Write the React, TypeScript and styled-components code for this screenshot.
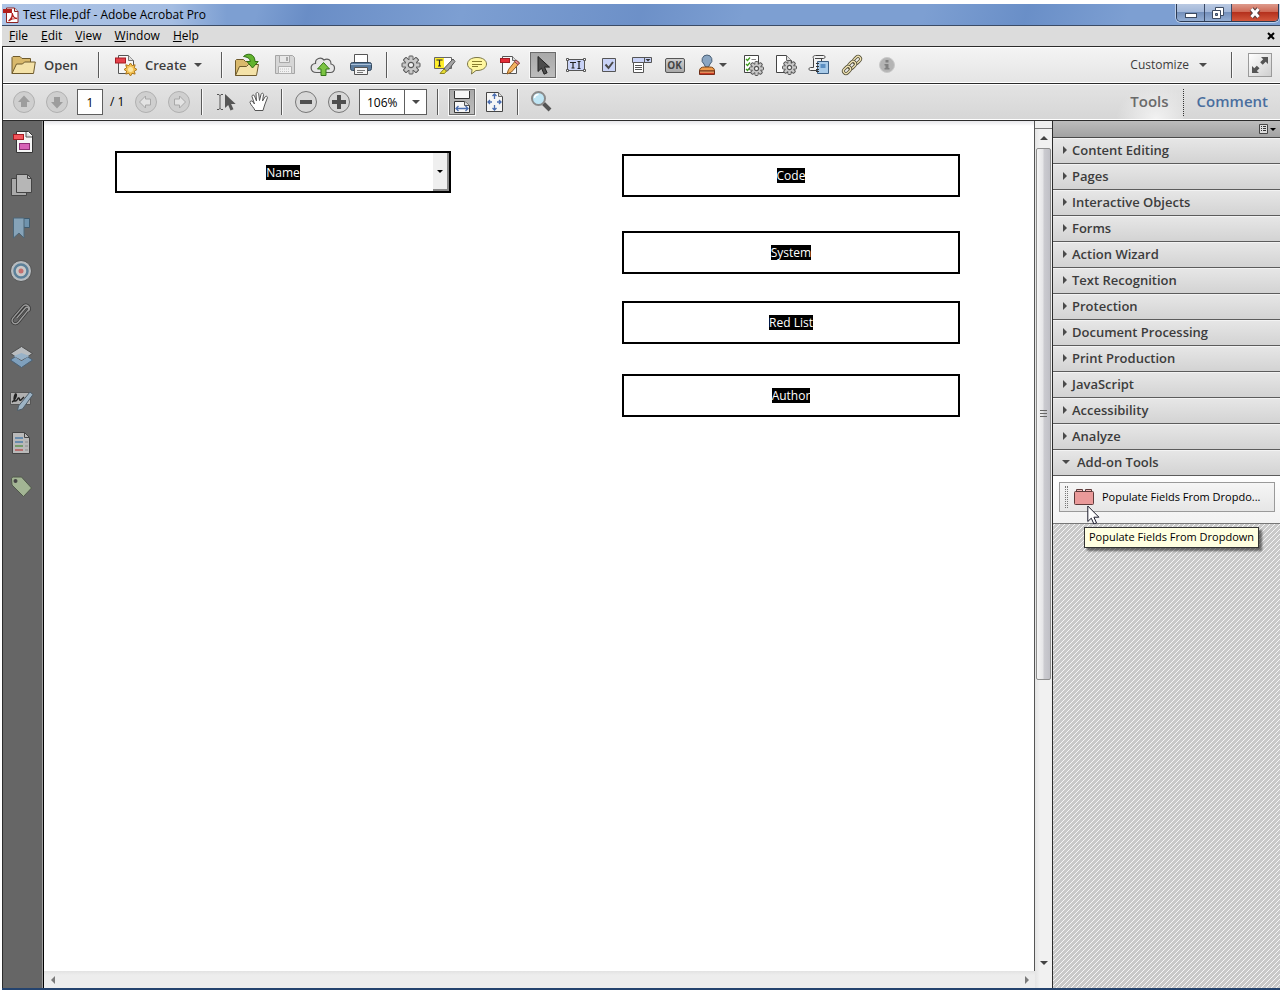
import React, { ReactNode } from 'react';
import styled, { createGlobalStyle, css } from 'styled-components';

const GlobalStyle = createGlobalStyle`
  *, *::before, *::after { box-sizing: border-box; }
  html, body { margin: 0; background: #ffffff; }
  body, button, input, select {
    font-family: 'Open Sans', 'Noto Sans', sans-serif;
    font-size: 12px;
    line-height: 16px;
    color: #000000;
  }
  button { border: 0; padding: 0; background: none; }
  svg { display: block; flex: none; }
`;

/* ---------- window frame ---------- */

const Window = styled.div`
  display: flex;
  flex-direction: column;
  min-height: 100vh;
  padding: 4px 0 0 2px;
`;

const TitleBar = styled.header`
  display: flex;
  align-items: flex-start;
  justify-content: space-between;
  height: 22px;
  border-bottom: 1px solid #3c4c66;
  background:
    linear-gradient(90deg, rgba(205, 220, 242, 0.6) 0, rgba(196, 213, 239, 0.55) 170px, rgba(196, 213, 239, 0) 225px),
    linear-gradient(105deg, transparent 20%, rgba(60, 100, 170, 0.3) 24%, transparent 36%, rgba(60, 100, 170, 0.25) 50%, transparent 58%, transparent 72%, rgba(60, 105, 175, 0.3) 80%, transparent 88%),
    #7d9fd2;
`;

const Title = styled.h1`
  display: flex;
  align-items: center;
  gap: 4px;
  height: 21px;
  margin: 0;
  padding-left: 1px;
  font-size: 12px;
  font-weight: 400;
`;

const WindowButtons = styled.div`
  display: flex;
  height: 18px;
  margin-right: 1px;
  border: 1px solid #2c3a52;
  border-top: 0;
  border-radius: 0 0 5px 5px;
  overflow: hidden;
  box-shadow: 0 0 0 1px rgba(255, 255, 255, 0.5);
`;

const WindowButton = styled.button<{ $close?: boolean }>`
  display: flex;
  align-items: center;
  justify-content: center;
  width: ${(p) => (p.$close ? 47 : 27)}px;
  background: ${(p) =>
    p.$close
      ? 'linear-gradient(#dd9a8c 0, #cf6a56 45%, #b5311d 50%, #d2573c 100%)'
      : 'linear-gradient(#b9c9e2 0, #a3b8d9 45%, #7490bb 50%, #94aed4 100%)'};
  & + & { border-left: 1px solid #3a4a66; }
`;

const MenuBar = styled.nav`
  display: flex;
  align-items: center;
  justify-content: space-between;
  height: 21px;
  padding: 0 4px 0 0;
  background: #dcdcdc;
  border-bottom: 1px solid #2b2b2b;
`;

const MenuList = styled.div`
  display: flex;
`;

const MenuItem = styled.button`
  padding: 0 7px 0 6px;
  &:first-child { padding-left: 7px; }
`;

const CloseDoc = styled.button`
  display: flex;
  padding: 1px;
`;

/* ---------- toolbars ---------- */

const Toolbar = styled.div<{ $lower?: boolean }>`
  display: flex;
  align-items: center;
  height: 37px;
  padding-left: 4px;
  border-left: 1px solid #2b2b2b;
  border-bottom: 1px solid #2b2b2b;
  box-shadow: inset 0 1px 0 #ffffff, inset 0 -1px 0 #ffffff;
  background: ${(p) => (p.$lower ? 'linear-gradient(#e3e3e3, #d6d6d6)' : 'linear-gradient(#f4f4f4, #e4e4e4)')};
`;

const Spacer = styled.div`
  flex: 1;
`;

const Separator = styled.div<{ $gap?: number }>`
  width: 2px;
  height: 26px;
  margin: 0 ${(p) => p.$gap ?? 6}px;
  border-left: 1px solid #5a5a5a;
  border-right: 1px solid #fafafa;
`;

const ToolButton = styled.button<{ $width?: number }>`
  display: flex;
  align-items: center;
  justify-content: center;
  width: ${(p) => p.$width ?? 33}px;
  height: 28px;
`;

const Pressed = styled.span`
  display: flex;
  align-items: center;
  justify-content: center;
  width: 26px;
  height: 26px;
  border: 1px solid #6b6b6b;
  background: linear-gradient(#a9a9a9, #bdbdbd);
  box-shadow: 0 0 0 1px #f8f8f8;
`;

const TextButton = styled.button`
  display: flex;
  align-items: center;
  gap: 8px;
  height: 28px;
  font-size: 13px;
  font-weight: 600;
  color: #3c3c3c;
`;

const CustomizeButton = styled(TextButton)`
  gap: 10px;
  padding-right: 18px;
  font-size: 12px;
  font-weight: 400;
`;

const ExpandButton = styled.button`
  display: flex;
  align-items: center;
  justify-content: center;
  width: 24px;
  height: 24px;
  margin: 0 8px 0 9px;
  border: 1px solid #9a9a9a;
  background: linear-gradient(135deg, #ffffff, #cfcfcf);
`;

const Caret = styled.span`
  border: 4px solid transparent;
  border-top-color: #4a4a4a;
  border-bottom: 0;
`;

const fieldStyle = css`
  height: 26px;
  border: 1px solid #5e5e5e;
  border-radius: 0;
  background: #ffffff;
  outline: 0;
`;

const PageInput = styled.input`
  ${fieldStyle}
  width: 26px;
  margin: 0 7px 0 4px;
  padding: 0;
  text-align: center;
`;

const PageTotal = styled.span`
  width: 19px;
  white-space: nowrap;
`;

const ZoomBox = styled.div`
  display: flex;
  margin: 0 4px;
`;

const ZoomInput = styled.input`
  ${fieldStyle}
  width: 46px;
  padding: 0 0 0 7px;
`;

const ZoomDrop = styled.button`
  ${fieldStyle}
  display: flex;
  align-items: center;
  justify-content: center;
  width: 22px;
  border-left: 0;
`;

const PaneTab = styled.button<{ $active?: boolean }>`
  align-self: stretch;
  margin: 1px 0;
  padding: ${(p) => (p.$active ? '1px 14px 3px' : '1px 12px 3px 13px')};
  font-size: 15px;
  font-weight: 600;
  color: ${(p) => (p.$active ? '#6a6a6a' : '#4a6e9e')};
  background: ${(p) => (p.$active ? 'radial-gradient(ellipse at 60% 100%, #f2f2f2 0, rgba(242, 242, 242, 0) 70%)' : 'none')};
`;

const DottedLine = styled.div`
  height: 27px;
  border-left: 1px dotted #333333;
`;

/* ---------- body ---------- */

const Body = styled.div`
  display: flex;
  flex: 1;
  border-bottom: 2px solid #24436e;
`;

const SideBar = styled.aside`
  display: flex;
  flex-direction: column;
  align-items: center;
  gap: 19px;
  width: 42px;
  padding: 9px 3px 0 0;
  border-left: 1px solid #2b2b2b;
  border-right: 1px solid #000000;
  background: #666666;
  box-shadow: inset -1px 0 0 #9d9d9d;
`;

const SideButton = styled.button`
  display: flex;
`;

const Viewer = styled.main`
  display: flex;
  flex: 1;
  min-width: 0;
`;

const PageColumn = styled.div`
  display: flex;
  flex: 1;
  flex-direction: column;
  min-width: 0;
`;

const Page = styled.div`
  display: flex;
  flex: 1;
  align-items: flex-start;
  justify-content: space-between;
  padding: 30px 74px 0 71px;
  border-right: 1px solid #555555;
  background: linear-gradient(#e6e6ea 0, #ffffff 5px);
`;

const FieldColumn = styled.div`
  display: flex;
  flex-direction: column;
  width: 338px;
  padding-top: 3px;
`;

const FormField = styled.label<{ $before?: number }>`
  display: flex;
  align-items: center;
  justify-content: center;
  height: 43px;
  margin-top: ${(p) => p.$before ?? 0}px;
  border: 2px solid #000000;
  background: #ffffff;
`;

const DropField = styled(FormField)`
  width: 336px;
  height: 42px;
`;

const fieldNameStyle = css`
  height: 15px;
  margin: 0;
  padding: 0;
  border: 0;
  border-radius: 0;
  outline: 0;
  line-height: 15px;
  color: #ffffff;
  background: #000000;
  field-sizing: content;
`;

const FieldInput = styled.input`
  ${fieldNameStyle}
`;

const FieldSelect = styled.select`
  ${fieldNameStyle}
  appearance: none;
  margin: 0 auto;
`;

const FieldArrow = styled.span`
  display: flex;
  align-items: center;
  justify-content: center;
  width: 16px;
  height: 38px;
  margin-left: -16px;
  border-right: 2px solid #8a8a8a;
  border-bottom: 2px solid #8a8a8a;
  background: #efefef;
`;

const SmallCaret = styled.span`
  border: 3px solid transparent;
  border-top-color: #000000;
  border-bottom: 0;
`;

const ScrollColumn = styled.div`
  display: flex;
  flex-direction: column;
  align-items: center;
  width: 17px;
  padding-bottom: 17px;
  background: linear-gradient(90deg, #e4e4e4, #f1f1f1 5px);
`;

const SplitHandle = styled.div`
  width: 100%;
  height: 8px;
  border-bottom: 1px solid #777777;
  background: #eeeeee;
`;

const ScrollButton = styled.button`
  display: flex;
  align-items: center;
  justify-content: center;
  width: 17px;
  height: 17px;
`;

const ScrollTrack = styled.div`
  display: flex;
  flex: 1;
  width: 15px;
  padding-top: 2px;
`;

const ScrollThumb = styled.div`
  display: flex;
  flex-direction: column;
  align-items: center;
  justify-content: center;
  gap: 2px;
  width: 15px;
  height: 66%;
  border: 1px solid #8e8e8e;
  border-radius: 2px;
  background: linear-gradient(90deg, #f5f5f5 0, #e6e6e8 45%, #cbcbd0 55%, #c0c0c6 100%);
`;

const Grip = styled.span`
  width: 7px;
  height: 1px;
  background: #666666;
`;

const HorizontalScroll = styled.div`
  display: flex;
  align-items: flex-start;
  justify-content: space-between;
  height: 17px;
  background: linear-gradient(#e2e2e2, #ededed 4px);
`;

/* ---------- tools pane ---------- */

const ToolsPane = styled.aside`
  display: flex;
  flex-direction: column;
  width: 228px;
  border-left: 1px solid #2b2b2b;
  background-color: #c9c9c9;
  background-image: linear-gradient(135deg, #c9c9c9 45%, #f6f6f6 45%, #f6f6f6 55%, #c9c9c9 55%);
  background-size: 5px 5px;
`;

const PaneHeader = styled.div`
  display: flex;
  align-items: center;
  justify-content: flex-end;
  height: 17px;
  padding-right: 4px;
  border-bottom: 1px solid #4a4a4a;
  background: linear-gradient(#bcbcbc, #a2a2a2);
`;

const PaneMenu = styled.button`
  display: flex;
  align-items: center;
  gap: 2px;
`;

const PaneRow = styled.button<{ $open?: boolean }>`
  display: flex;
  align-items: center;
  gap: ${(p) => (p.$open ? 7 : 5)}px;
  width: 100%;
  height: 26px;
  padding: 0 9px 1px;
  border-bottom: 1px solid #5c5c5c;
  box-shadow: inset 0 1px 0 #f3f3f3;
  background: linear-gradient(#e7e7e7, #d3d3d3);
  font-size: 13px;
  font-weight: 600;
  color: #3c3c3c;
`;

const Arrow = styled.span<{ $open?: boolean }>`
  border: 4px solid transparent;
  ${(p) =>
    p.$open
      ? css`border-top-color: #4a4a4a; border-bottom: 0;`
      : css`border-left-color: #4a4a4a; border-right: 0; margin-left: 1px;`}
`;

const AddOns = styled.section`
  position: relative;
  padding: 6px 5px 11px 6px;
  border-bottom: 1px solid #777777;
  background: linear-gradient(#ffffff, #f2f2f2);
`;

const AddOnButton = styled.button`
  display: flex;
  align-items: center;
  gap: 7px;
  width: 100%;
  height: 30px;
  padding: 0 4px 0 5px;
  border: 1px solid #9a9a9a;
  background: linear-gradient(#f6f6f6, #e6e6e6);
  font-size: 11px;
  white-space: nowrap;
`;

const DragDots = styled.span`
  width: 3px;
  height: 22px;
  margin-right: -2px;
  border-left: 1px dotted #777777;
  border-right: 1px dotted #777777;
`;

const Pointer = styled.div`
  position: absolute;
  left: 34px;
  top: 29px;
`;

const Tooltip = styled.div`
  position: absolute;
  left: 31px;
  top: 51px;
  padding: 1px 4px 2px;
  border: 1px solid #333333;
  background: #ffffe1;
  box-shadow: 3px 3px 2px rgba(0, 0, 0, 0.5);
  font-size: 11px;
  white-space: nowrap;
`;

/* ---------- drawings ---------- */

const Icon = ({ s = 24, children }: { s?: number; children: ReactNode }) => (
  <svg width={s} height={s} viewBox={`0 0 ${s} ${s}`} fill="none" aria-hidden="true">
    {children}
  </svg>
);

const gearTeeth = [0, 45, 90, 135, 180, 225, 270, 315];

const Gear = ({ x, y, r = 9 }: { x: number; y: number; r?: number }) => (
  <g transform={`translate(${x} ${y})`}>
    {gearTeeth.map((a) => (
      <rect key={a} x={-r * 0.22} y={-r} width={r * 0.44} height={r * 0.5} rx="0.6" transform={`rotate(${a})`} fill="#c4c4c4" stroke="#555" strokeWidth="1" />
    ))}
    <circle r={r * 0.68} fill="#c9c9c9" stroke="#555" strokeWidth="1" />
    {gearTeeth.map((a) => (
      <rect key={a} x={-r * 0.16} y={-r * 0.85} width={r * 0.32} height={r * 0.4} transform={`rotate(${a})`} fill="#c9c9c9" />
    ))}
    <circle r={r * 0.3} fill="#f2f2f2" stroke="#555" strokeWidth="1.2" />
  </g>
);

const AppIcon = () => (
  <Icon s={16}>
    <path d="M3.5 1h8l3.500 3.500V15.500H3.500z" fill="#fff" stroke="#8d2320" />
    <path d="M11.500 1v3.500H15" fill="#ddd" stroke="#8d2320" />
    <path d="M0 2h9v4H0z" fill="#b3201e" />
    <path d="M5.500 14c3-2 4.200-5 3.700-8 .6 3.600 2.500 5.400 5 5.500-3-.3-6 .5-8.700 2.500z" stroke="#b3201e" strokeWidth="1.300" />
  </Icon>
);

const FolderIcon = () => (
  <Icon s={26}>
    <path d="M2 21.500V5.500l1-1h7l2 2h8.500v4" fill="#d9b96c" stroke="#6e5a2c" />
    <path d="M2 21.500l4.500-9.500h6l2-2h10.800l-1.800 11.500z" fill="#f4e2a8" stroke="#6e5a2c" />
  </Icon>
);

const CreateIcon = () => (
  <Icon s={24}>
    <path d="M4.500 2.500h10l5 5v13h-15z" fill="#f7f7f7" stroke="#555" />
    <path d="M14.500 2.500v5h5" fill="#ddd" stroke="#777" />
    <rect x="1.500" y="5" width="10" height="5" fill="#e5404a" stroke="#a31c22" />
    <path d="M16.500 10l1.600 2.600 3-.8-.8 3 2.700 1.700-2.700 1.600.8 3-3-.8-1.600 2.700-1.700-2.700-3 .8.800-3-2.600-1.600 2.600-1.700-.8-3 3 .8z" fill="#f4c356" stroke="#b07818" />
    <circle cx="16.500" cy="16.500" r="2.500" fill="#fbe7a6" />
  </Icon>
);

const OpenRecentIcon = () => (
  <Icon s={26}>
    <path d="M1.500 23.500v-15l1-1h7l2 2h8.500v4" fill="#d9b96c" stroke="#6e5a2c" />
    <path d="M1.500 23.500l4-9h7l2-2h10l-2 11z" fill="#f4e2a8" stroke="#6e5a2c" />
    <path d="M9.500 4.500c4-4 11.500-3 11.500 5h3.200L18.500 16 13 9.500h3.200C16 6 13 5 9.500 4.500z" fill="#62b32e" stroke="#2f6d12" />
  </Icon>
);

const SaveIcon = () => (
  <Icon s={22}>
    <path d="M1.500 1.500h17l2 2v16h-19z" fill="#d6d6d6" stroke="#a5a5a5" />
    <path d="M5.500 1.500h10v7h-10z" fill="#e8e8e8" stroke="#a8a8a8" />
    <path d="M12 3h2v4h-2z" fill="#a8a8a8" />
    <path d="M4.500 12.500h13v7h-13z" fill="#f1f1f1" stroke="#b0b0b0" />
    <path d="M6 15h10M6 17.500h10" stroke="#c2c2c2" strokeDasharray="1 1" />
  </Icon>
);

const CloudIcon = () => (
  <Icon s={26}>
    <path d="M6.500 20.500c-7 0-7-9-1-9-.5-5 5.500-7 8.500-3.500 4-2.500 7.500.5 7 4 5 1 4.500 8-.5 8.500z" fill="#e6e6e6" stroke="#5c5c5c" strokeWidth="1.200" />
    <path d="M13.500 10.500l6 6.500h-3.500v6.500h-5V17H7.500z" fill="#7cc443" stroke="#35761a" />
  </Icon>
);

const PrintIcon = () => (
  <Icon s={24}>
    <path d="M5.500 1.500h13v9h-13z" fill="#fff" stroke="#555" />
    <rect x="1.500" y="9.500" width="21" height="8" rx="2" fill="#5b7c9e" stroke="#34495f" />
    <path d="M2 11.500h20" stroke="#a9c0d8" />
    <path d="M5.500 14.500h13v7h-13z" fill="#f4f4f4" stroke="#555" />
    <path d="M8 17.500h8M8 19.500h6" stroke="#777" />
  </Icon>
);

const HighlightIcon = () => (
  <Icon>
    <path d="M2.500 4.500h17v11h-17z" fill="#fff" stroke="#666" />
    <path d="M3 5h9v10H3z" fill="#ffee2b" />
    <path d="M5 7.500V7h5v.5M7.500 7v6M6 13h3" stroke="#222" strokeWidth="1.200" />
    <path d="M21 6l-8.500 9-.5 3.500 3.500-.5 7.500-9.500z" fill="#a6a6a6" stroke="#555" />
    <path d="M8 20.500l4-4.500 2.500 2-2 2.500z" fill="#e7dc34" stroke="#8c8420" />
  </Icon>
);

const CommentIcon = () => (
  <Icon>
    <path d="M12 4.500c5.500 0 9.500 2.700 9.500 6.500s-4 6.500-9.500 6.500h-1L6.500 21l.5-4.500C4 15.500 2.500 13.500 2.500 11c0-3.800 4-6.500 9.500-6.500z" fill="#fff7a0" stroke="#7b7647" />
    <path d="M7 8.500h10M7 11.500h10M7 13.500h6" stroke="#8a7d2e" />
  </Icon>
);

const EditPdfIcon = () => (
  <Icon>
    <path d="M4.500 3.500h10l4 4v13h-14z" fill="#f9f9f9" stroke="#555" />
    <path d="M14.500 3.500v4h4" fill="#ddd" stroke="#666" />
    <rect x="2.500" y="5.500" width="9" height="4" fill="#e32c36" stroke="#a31c22" />
    <path d="M18 7l3.500 3-8 9-4.500 2 1.500-4.500z" fill="#f3b35f" stroke="#8f5b22" />
    <path d="M18 7l3.500 3-1.500 1.700-3.500-3z" fill="#e98a8a" stroke="#8f4a4a" />
  </Icon>
);

const PointerIcon = () => (
  <Icon>
    <path d="M7 3.500v15l3.500-3.300 2.600 6 3-1.400-2.600-5.700h5z" fill="#4c4c4c" stroke="#222" />
  </Icon>
);

const TextFieldIcon = () => (
  <Icon>
    <path d="M3.500 6.500h17v11h-17z" fill="#c9d3f7" stroke="#555" />
    <path d="M2.500 5.500h2v2h-2zM19.500 5.500h2v2h-2zM2.500 16.500h2v2h-2zM19.500 16.500h2v2h-2z" fill="#fff" stroke="#555" />
    <path d="M6 9.500h6M9 9.500V15M7.500 15h3M13.500 8.500h3M13.500 15.500h3M15 8.500v7" stroke="#222" strokeWidth="1.200" />
  </Icon>
);

const CheckIcon = () => (
  <Icon>
    <path d="M5.500 5.500h13v13h-13z" fill="#c9d3f7" stroke="#555" />
    <path d="M8.500 11.500l3 3.500 4.500-6" stroke="#4a4a4a" strokeWidth="2" />
  </Icon>
);

const ListFieldIcon = () => (
  <Icon>
    <path d="M2.500 4.500h19v5h-19z" fill="#c9d3f7" stroke="#555" />
    <path d="M14.500 4.500v5" stroke="#555" />
    <path d="M15.500 6h5L18 8.500z" fill="#333" />
    <path d="M3.500 9.500h10v10h-10z" fill="#fff" stroke="#555" />
    <path d="M5 12.500h7M5 14.500h7M5 16.500h7" stroke="#555" />
  </Icon>
);

const OkBadge = styled.span`
  display: flex;
  align-items: center;
  justify-content: center;
  width: 20px;
  height: 15px;
  border: 1px solid #555555;
  border-radius: 2px;
  background: linear-gradient(#cfcfcf, #a9a9a9);
  font-size: 10px;
  font-weight: 700;
  line-height: 12px;
  color: #444444;
`;

const StampIcon = () => (
  <Icon>
    <path d="M12 2a5 5 0 0 1 3 9l-1.500 3h-3L9 11a5 5 0 0 1 3-9z" fill="#8ba6c2" stroke="#4a6076" />
    <path d="M4.500 18c0-3 2-4 5-4h5c3 0 5 1 5 4z" fill="#ef9c4c" stroke="#7c4519" />
    <path d="M4.500 18h15v3.500h-15z" fill="#efa868" stroke="#6b2b18" />
    <path d="M5 20.500h14" stroke="#c83a26" strokeWidth="1.500" />
  </Icon>
);

const FormGearIcon = () => (
  <Icon>
    <path d="M3.500 2.500h14v17h-14z" fill="#fff" stroke="#444" />
    <path d="M5 6l1.500 1.500L9 4.500M5 11l1.500 1.500L9 9.500M5 16l1.500 1.500L8 15.500" stroke="#3e9a1e" strokeWidth="1.300" />
    <path d="M10.500 6.500H15" stroke="#888" />
    <Gear x={15.5} y={15.5} r={7} />
  </Icon>
);

const PageGearIcon = () => (
  <Icon>
    <path d="M2.500 2.500h10l5 5v12h-15z" fill="#fff" stroke="#444" />
    <path d="M12.500 2.500v5h5" fill="#ddd" stroke="#666" />
    <Gear x={15.5} y={14.5} r={7} />
  </Icon>
);

const ScriptIcon = () => (
  <Icon>
    <path d="M6.500 5.500c-1.500-3 2-3 2-3h8c2 0 2 3 0 3h-2v12h-11c-2 0-2-3 0-3h3z" fill="#f2f2f2" stroke="#444" />
    <path d="M8 5.500h7" stroke="#444" />
    <path d="M10.500 8.500h11v12h-11z" fill="#a9cbe9" stroke="#3c5f84" />
    <path d="M13.500 11h5v4h-5z" fill="#5c8fc2" />
    <path d="M9 10.500h3M9 13.500h3M9 16.500h3M9 18.500h3" stroke="#333" />
  </Icon>
);

const LinkIcon = () => (
  <Icon>
    {[
      [17, 7],
      [12, 12],
      [7, 17],
    ].map(([x, y]) => (
      <g key={x} transform={`translate(${x} ${y}) rotate(-45)`}>
        <rect x="-4" y="-2.500" width="8" height="5" rx="2.500" stroke="#54503a" strokeWidth="3" />
        <rect x="-4" y="-2.500" width="8" height="5" rx="2.500" stroke="#f0e3b4" strokeWidth="1.300" />
      </g>
    ))}
  </Icon>
);

const InfoIcon = () => (
  <Icon>
    <circle cx="12" cy="12" r="7.500" fill="#b4b4b4" stroke="#c9c9c9" />
    <path d="M10.500 7h3v2.500h-3zM9.500 11h4v4h1v1.500H9.500V15h1v-2.500h-1z" fill="#808080" />
  </Icon>
);

const ExpandIcon = () => (
  <Icon s={20}>
    <path d="M11 2h7v7l-2.300-2.300-3 3-2.500-2.500 3-3zM2 11l2.300 2.300 2.500-2.500 2.700 2.500-2.700 2.600L9 18H2z" fill="#555" />
  </Icon>
);

const RoundIcon = ({ faded, children }: { faded?: boolean; children: ReactNode }) => (
  <Icon>
    <circle cx="12" cy="12" r="10.500" fill={faded ? '#cfcfcf' : '#d8d8d8'} stroke={faded ? '#b0b0b0' : '#777'} />
    {children}
  </Icon>
);

const UpIcon = () => (
  <RoundIcon faded>
    <path d="M12 5.500l6 6.500h-3v5H9v-5H6z" fill="#9d9d9d" />
  </RoundIcon>
);
const DownIcon = () => (
  <RoundIcon faded>
    <path d="M12 18.500L6 12h3V7h6v5h3z" fill="#9d9d9d" />
  </RoundIcon>
);
const BackIcon = () => (
  <RoundIcon faded>
    <path d="M5.500 12l6-6v3h5v6h-5v3z" fill="#e3e3e3" stroke="#a8a8a8" />
  </RoundIcon>
);
const ForwardIcon = () => (
  <RoundIcon faded>
    <path d="M18.500 12l-6-6v3h-5v6h5v3z" fill="#e3e3e3" stroke="#a8a8a8" />
  </RoundIcon>
);
const MinusIcon = () => (
  <RoundIcon>
    <path d="M6 10h12v4H6z" fill="#4f4f4f" />
  </RoundIcon>
);
const PlusIcon = () => (
  <RoundIcon>
    <path d="M10 5h4v5h5v4h-5v5h-4v-5H5v-4h5z" fill="#4f4f4f" />
  </RoundIcon>
);

const SelectTextIcon = () => (
  <Icon>
    <path d="M3 4.500h2l1 1 1-1h2M6 5v14M3 19.500h2l1-1 1 1h2" stroke="#555" />
    <path d="M11 4v14l3.200-3 2.300 5.500 3-1.300-2.400-5.200h4.600z" fill="#555" />
  </Icon>
);

const HandIcon = () => (
  <Icon>
    <path d="M8 20.500c-1-3-4-5-5-8 0-2 2-2 3-.5l1.500 2L5 6.500c0-2 2-2 2.500-.5L9.500 11 9 4c0-2 2.500-2 2.700 0l.8 6.500L14 4.500c.5-2 2.700-1.500 2.500.3L15.500 11l2.500-4c1-1.500 3-.5 2.300 1L18 14c-.5 2-1.500 4-2 6.500z" fill="#fff" stroke="#555" />
  </Icon>
);

const FitWidthIcon = () => (
  <Icon>
    <path d="M4.500 1v7.500h15V1" fill="#f6f6f6" stroke="#333" />
    <path d="M4.500 22.500v-11h10l5 4v7z" fill="#f6f6f6" stroke="#333" />
    <path d="M14.500 11.500v4h5" fill="#ddd" stroke="#555" />
    <path d="M6 18.500h12M8.500 16L6 18.500 8.500 21M15.500 16l2.500 2.500-2.500 2.500" stroke="#4a6db0" strokeWidth="1.300" />
  </Icon>
);

const FitPageIcon = () => (
  <Icon>
    <path d="M3.500 2.500h12l4 4v15h-16z" fill="#f6f6f6" stroke="#444" />
    <path d="M15.500 2.500v4h4" fill="#ddd" stroke="#666" />
    <path d="M11.500 4v5M11.500 15v5M5 12h4M14 12h4M9.500 6l2-2 2 2M9.500 18l2 2 2-2M7 10l-2 2 2 2M16 10l2 2-2 2" stroke="#4a6db0" strokeWidth="1.300" />
  </Icon>
);

const MagnifyIcon = () => (
  <Icon>
    <path d="M13.500 13.500l6.500 6.500" stroke="#555" strokeWidth="4" />
    <circle cx="8.500" cy="8.500" r="6.500" fill="#bfe6f5" stroke="#8a8a8a" strokeWidth="2" />
    <path d="M4.500 8a4 4 0 0 1 4-3.500" stroke="#fff" strokeWidth="1.500" />
  </Icon>
);

const sideIcons: { name: string; art: ReactNode }[] = [
  {
    name: 'Sign',
    art: (
      <>
        <path d="M6.500 1.500h12l4 4v17h-16z" fill="#f5f5f5" stroke="#333" />
        <path d="M16 2v5h6" fill="#ddd" stroke="#555" />
        <rect x="3.500" y="4.500" width="10" height="5" fill="#f2555c" stroke="#a31c22" />
        <rect x="9.500" y="13.500" width="10" height="6" fill="#d662b6" stroke="#8b2d72" />
      </>
    ),
  },
  {
    name: 'Page thumbnails',
    art: (
      <>
        <path d="M1.500 5.500h15v17h-15z" fill="#a9a9a9" stroke="#444" />
        <path d="M6.500 1.500h11l4 4v14h-15z" fill="#b6b6b6" stroke="#444" />
        <path d="M17.500 1.500v4h4" stroke="#444" />
      </>
    ),
  },
  {
    name: 'Bookmarks',
    art: (
      <>
        <path d="M12 2.500h7.500v9H14z" fill="#6f93ad" stroke="#3f5a6d" />
        <path d="M3.500 2H14v20l-5-5-5.500 5z" fill="#86a3b8" stroke="#4c6678" />
      </>
    ),
  },
  {
    name: 'Destinations',
    art: (
      <>
        <circle cx="11" cy="12" r="10.500" fill="#b7bcc0" stroke="#555" />
        <circle cx="11" cy="12" r="6.500" fill="#c8c8c8" stroke="#5c8099" strokeWidth="2.500" />
        <circle cx="11" cy="12" r="2.500" fill="#c56f6f" />
      </>
    ),
  },
  {
    name: 'Attachments',
    art: (
      <>
        <path d="M7 16L16 5.500c2-2.200 4.800-.2 3.200 2L9 20c-3.500 4-9 .5-6-3.800L13.500 3.800c3.500-3.800 9.500.5 6 4.700" stroke="#383838" strokeWidth="3" transform="translate(0 1) scale(.95)" />
        <path d="M7 16L16 5.500c2-2.200 4.800-.2 3.200 2L9 20c-3.500 4-9 .5-6-3.800L13.500 3.800c3.500-3.800 9.500.5 6 4.700" stroke="#9c9c9c" strokeWidth="1.400" transform="translate(0 1) scale(.95)" />
      </>
    ),
  },
  {
    name: 'Layers',
    art: (
      <>
        <path d="M11.500 7.500l11 7.500-11 7.500L.5 15z" fill="#7fa0bd" stroke="#4a6277" />
        <path d="M11.500 1.500l11 7-11 7-11-7z" fill="#b9bcbf" stroke="#4d4d4d" />
        <path d="M11.500 8l8 3-8 4-8-4z" fill="#98b2c8" />
      </>
    ),
  },
  {
    name: 'Signatures',
    art: (
      <>
        <path d="M.5 4.500h20v12H.5z" fill="#b0b0b0" stroke="#555" />
        <path d="M2 14c3-1 5-7 4-8s-3 6-1 7 3-4 4-3 0 3 2 2l3-3" stroke="#222" strokeWidth="1.500" />
        <path d="M20 4l3 2.500L12.500 21 7.500 22.500 8.500 18z" fill="#9db3c4" stroke="#4d5c68" />
      </>
    ),
  },
  {
    name: 'Content',
    art: (
      <>
        <path d="M2.500 1.500h12l5 5v16h-17z" fill="#b9b9b9" stroke="#444" />
        <path d="M14.500 1.500v5h5" stroke="#444" />
        <path d="M5 7h8M5 11h8" stroke="#4f7ea8" strokeWidth="1.500" />
        <path d="M5 15h8" stroke="#5f9350" strokeWidth="1.500" />
        <path d="M5 19h8" stroke="#b95757" strokeWidth="1.500" />
        <path d="M15 11h3M15 15h3M15 19h3" stroke="#8a8a8a" />
      </>
    ),
  },
  {
    name: 'Tags',
    art: (
      <>
        <path d="M1.500 5c0-1 1-2 2-2h8l10 11-8 8.500L2 11z" fill="#a3b594" stroke="#50594a" />
        <circle cx="5.500" cy="7" r="2" fill="#444" />
      </>
    ),
  },
];

const menus = ['File', 'Edit', 'View', 'Window', 'Help'];

const fileTools = [
  { name: 'Open file', art: <OpenRecentIcon /> },
  { name: 'Save', art: <SaveIcon /> },
  { name: 'Upload', art: <CloudIcon /> },
  { name: 'Print', art: <PrintIcon /> },
];

const formTools = [
  { name: 'Settings', art: <Icon><Gear x={12} y={12} /></Icon> },
  { name: 'Highlight text', art: <HighlightIcon /> },
  { name: 'Add comment', art: <CommentIcon /> },
  { name: 'Edit document', art: <EditPdfIcon /> },
  { name: 'Select object', art: <Pressed><PointerIcon /></Pressed> },
  { name: 'Text field', art: <TextFieldIcon /> },
  { name: 'Check box', art: <CheckIcon /> },
  { name: 'Dropdown', art: <ListFieldIcon /> },
  { name: 'Button', art: <OkBadge>OK</OkBadge> },
];

const pageTools = [
  { name: 'Edit form', art: <FormGearIcon /> },
  { name: 'Page settings', art: <PageGearIcon /> },
  { name: 'Document scripts', art: <ScriptIcon /> },
  { name: 'Link', art: <LinkIcon /> },
];

const panels = [
  'Content Editing', 'Pages', 'Interactive Objects', 'Forms', 'Action Wizard', 'Text Recognition',
  'Protection', 'Document Processing', 'Print Production', 'JavaScript', 'Accessibility', 'Analyze',
];

const textFields = [
  { name: 'Code', before: 0 },
  { name: 'System', before: 34 },
  { name: 'Red List', before: 27 },
  { name: 'Author', before: 30 },
];

const Tools = ({ items, width }: { items: { name: string; art: ReactNode }[]; width?: number }) => (
  <>
    {items.map((t) => (
      <ToolButton key={t.name} aria-label={t.name} $width={width}>
        {t.art}
      </ToolButton>
    ))}
  </>
);

const OpenButton = styled(TextButton)`
  width: 82px;
  margin-left: 3px;
`;

const CreateButton = styled(TextButton)`
  gap: 7px;
  width: 96px;
  margin: 0 6px 0 8px;
`;

const StampButton = styled(ToolButton)`
  justify-content: flex-start;
  padding-left: 4px;
`;

export default function App() {
  return (
    <>
      <GlobalStyle />
      <Window>
        <TitleBar>
          <Title>
            <AppIcon />
            Test File.pdf - Adobe Acrobat Pro
          </Title>
          <WindowButtons>
            <WindowButton aria-label="Minimize">
              <svg width="14" height="12" viewBox="0 0 14 12">
                <rect x="1.500" y="6.500" width="11" height="4" fill="#fff" stroke="#3d4b61" />
              </svg>
            </WindowButton>
            <WindowButton aria-label="Restore">
              <svg width="14" height="14" viewBox="0 0 14 14">
                <path d="M4.500 1.500h8v8h-8z" fill="#fff" stroke="#3d4b61" />
                <path d="M1.500 4.500h8v8h-8z" fill="#fff" stroke="#3d4b61" />
                <path d="M4.500 7.500h2v2h-2z" fill="#7490bb" stroke="#3d4b61" />
              </svg>
            </WindowButton>
            <WindowButton $close aria-label="Close">
              <svg width="14" height="12" viewBox="0 0 14 12">
                <path d="M3.500 2l7 8M10.500 2l-7 8" stroke="#59413f" strokeWidth="5" />
                <path d="M3.500 2l7 8M10.500 2l-7 8" stroke="#fff" strokeWidth="3" />
              </svg>
            </WindowButton>
          </WindowButtons>
        </TitleBar>

        <MenuBar>
          <MenuList>
            {menus.map((m) => (
              <MenuItem key={m}>
                <u>{m[0]}</u>
                {m.slice(1)}
              </MenuItem>
            ))}
          </MenuList>
          <CloseDoc aria-label="Close document">
            <svg width="8" height="8" viewBox="0 0 8 8">
              <path d="M1 1l6 6M7 1L1 7" stroke="#000" strokeWidth="2" />
            </svg>
          </CloseDoc>
        </MenuBar>

        <Toolbar>
          <OpenButton>
            <FolderIcon />
            Open
          </OpenButton>
          <Separator />
          <CreateButton>
            <CreateIcon />
            Create
            <Caret />
          </CreateButton>
          <Separator $gap={5} />
          <Tools items={fileTools} width={38} />
          <Separator />
          <Tools items={formTools} />
          <StampButton $width={45} aria-label="Stamp">
            <StampIcon />
            <Caret />
          </StampButton>
          <Tools items={pageTools} />
          <ToolButton $width={38} aria-label="Information">
            <InfoIcon />
          </ToolButton>
          <Spacer />
          <CustomizeButton>
            Customize
            <Caret />
          </CustomizeButton>
          <Separator />
          <ExpandButton aria-label="Read mode">
            <ExpandIcon />
          </ExpandButton>
        </Toolbar>

        <Toolbar $lower>
          <ToolButton aria-label="Previous page"><UpIcon /></ToolButton>
          <ToolButton aria-label="Next page"><DownIcon /></ToolButton>
          <PageInput aria-label="Page number" defaultValue="1" />
          <PageTotal>/ 1</PageTotal>
          <ToolButton aria-label="Previous view"><BackIcon /></ToolButton>
          <ToolButton aria-label="Next view"><ForwardIcon /></ToolButton>
          <Separator />
          <ToolButton aria-label="Select text"><SelectTextIcon /></ToolButton>
          <ToolButton aria-label="Hand"><HandIcon /></ToolButton>
          <Separator />
          <ToolButton aria-label="Zoom out"><MinusIcon /></ToolButton>
          <ToolButton aria-label="Zoom in"><PlusIcon /></ToolButton>
          <ZoomBox>
            <ZoomInput aria-label="Zoom" defaultValue="106%" />
            <ZoomDrop aria-label="Zoom levels"><Caret /></ZoomDrop>
          </ZoomBox>
          <Separator />
          <ToolButton aria-label="Fit width"><Pressed><FitWidthIcon /></Pressed></ToolButton>
          <ToolButton aria-label="Fit page"><FitPageIcon /></ToolButton>
          <Separator />
          <ToolButton aria-label="Find"><MagnifyIcon /></ToolButton>
          <Spacer />
          <PaneTab $active>Tools</PaneTab>
          <DottedLine />
          <PaneTab>Comment</PaneTab>
        </Toolbar>

        <Body>
          <SideBar>
            {sideIcons.map((i) => (
              <SideButton key={i.name} aria-label={i.name}>
                <Icon>{i.art}</Icon>
              </SideButton>
            ))}
          </SideBar>
          <Viewer>
            <PageColumn>
              <Page>
                <DropField>
                  <FieldSelect aria-label="Name">
                    <option>Name</option>
                  </FieldSelect>
                  <FieldArrow>
                    <SmallCaret />
                  </FieldArrow>
                </DropField>
                <FieldColumn>
                  {textFields.map((f) => (
                    <FormField key={f.name} $before={f.before}>
                      <FieldInput aria-label={f.name} defaultValue={f.name} />
                    </FormField>
                  ))}
                </FieldColumn>
              </Page>
              <HorizontalScroll>
                <ScrollButton aria-label="Scroll left">
                  <svg width="4" height="8" viewBox="0 0 4 8"><path d="M4 0v8L0 4z" fill="#7a7a7a" /></svg>
                </ScrollButton>
                <ScrollButton aria-label="Scroll right">
                  <svg width="4" height="8" viewBox="0 0 4 8"><path d="M0 0v8l4-4z" fill="#7a7a7a" /></svg>
                </ScrollButton>
              </HorizontalScroll>
            </PageColumn>
            <ScrollColumn>
              <SplitHandle />
              <ScrollButton aria-label="Scroll up">
                <svg width="8" height="4" viewBox="0 0 8 4"><path d="M0 4h8L4 0z" fill="#444" /></svg>
              </ScrollButton>
              <ScrollTrack>
                <ScrollThumb>
                  <Grip />
                  <Grip />
                  <Grip />
                </ScrollThumb>
              </ScrollTrack>
              <ScrollButton aria-label="Scroll down">
                <svg width="8" height="4" viewBox="0 0 8 4"><path d="M0 0h8L4 4z" fill="#444" /></svg>
              </ScrollButton>
            </ScrollColumn>
          </Viewer>
          <ToolsPane>
            <PaneHeader>
              <PaneMenu aria-label="Pane options">
                <svg width="9" height="10" viewBox="0 0 9 10" fill="none">
                  <path d="M.5.5h8v9h-8z" fill="#ddd" stroke="#444" />
                  <path d="M2 2.500h1M2 4.500h1M2 6.500h1M4 2.500h3M4 4.500h3M4 6.500h3" stroke="#333" />
                </svg>
                <SmallCaret />
              </PaneMenu>
            </PaneHeader>
            {panels.map((p) => (
              <PaneRow key={p}>
                <Arrow />
                {p}
              </PaneRow>
            ))}
            <PaneRow $open>
              <Arrow $open />
              Add-on Tools
            </PaneRow>
            <AddOns>
              <AddOnButton>
                <DragDots />
                <svg width="22" height="18" viewBox="0 0 22 18">
                  <path d="M3.500 4V1.500h6V4M12.500 4V1.500h6V4" fill="#f2b8b8" stroke="#5e3a3a" />
                  <rect x="1.500" y="3.500" width="19" height="13" rx="1" fill="#ea9a9a" stroke="#5e3a3a" />
                </svg>
                Populate Fields From Dropdo...
              </AddOnButton>
              <Tooltip role="tooltip">Populate Fields From Dropdown</Tooltip>
              <Pointer>
                <svg width="13" height="20" viewBox="0 0 13 20">
                  <path d="M.8 1v15.500l3.500-3.300 2.600 5.800 2.600-1.100-2.600-5.700h5z" fill="#fff" stroke="#1a1a2a" />
                </svg>
              </Pointer>
            </AddOns>
          </ToolsPane>
        </Body>
      </Window>
    </>
  );
}
